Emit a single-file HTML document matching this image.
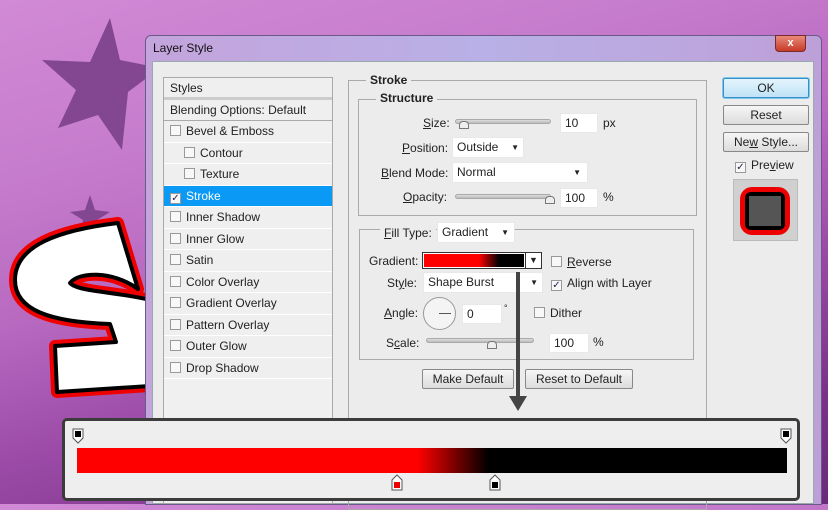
<!DOCTYPE html>
<html><head><style>
*{margin:0;padding:0;box-sizing:border-box}
html,body{width:828px;height:504px}
body{overflow:hidden;position:relative;font-family:"Liberation Sans",sans-serif;font-size:12px;color:#222;
background:linear-gradient(165deg,#d18ad6 0%,#c67ccc 25%,#b869c0 45%,#9a4aa6 65%,#7a3289 85%,#6a2a7a 100%)}
.a{position:absolute}
.lbl{position:absolute;font-size:12px;white-space:nowrap}
.inp{position:absolute;background:#fff;border:1px solid #e8e8e8;font-size:12px;padding:2px 4px}
.cb{display:inline-block;width:11px;height:11px;border:1px solid #999;background:#f8f8f8;vertical-align:-1px;margin-right:5px;font-size:10px;line-height:9px;text-align:center;color:#225}
.btn{position:absolute;border:1px solid #888;border-radius:2px;background:linear-gradient(#f6f6f6,#dcdcdc);text-align:center;font-size:12px;line-height:18px}
.row{height:21.5px;line-height:21px;padding-left:6px;border-bottom:1px solid #fff;background:#efefef;white-space:nowrap}
.slider{position:absolute;height:5px;border:1px solid #aaa;border-radius:3px;background:linear-gradient(#ddd,#bbb)}
.thumb{position:absolute;width:10px;height:8px;border:1px solid #777;background:#eee;border-radius:4px 4px 0 0}
</style></head><body>
<svg class="a" style="left:0;top:0" width="828" height="504">
<polygon points="110,18 120,60 160,68 128,92 122,150 98,115 58,128 76,90 42,60 90,62" fill="#834691"/>
<polygon points="90,195 95,210 110,212 97,220 100,232 90,224 80,232 83,220 70,212 85,210" fill="#834691"/>
<path d="M118,223 C60,230 15,245 15,280 C15,310 50,322 110,324 L116,342 L55,346 L57,392 L150,386 L150,300 C120,292 78,292 70,283 C78,272 112,270 138,289 Z" fill="#e00" stroke="#e00" stroke-width="12" stroke-linejoin="round"/>
<path d="M118,223 C60,230 15,245 15,280 C15,310 50,322 110,324 L116,342 L55,346 L57,392 L150,386 L150,300 C120,292 78,292 70,283 C78,272 112,270 138,289 Z" fill="#fff" stroke="#000" stroke-width="4" stroke-linejoin="round"/>
</svg>
<!-- dialog -->
<div class="a" style="left:145px;top:35px;width:677px;height:470px;border:1px solid #6a5a8a;border-radius:6px 6px 0 0;background:linear-gradient(90deg,#c4a4dc,#b8b0e6 50%,#bea0d8);"></div>
<div class="lbl" style="left:153px;top:41px;color:#111">Layer Style</div>
<div class="a" style="left:775px;top:35px;width:31px;height:17px;border:1px solid #7a2a2a;border-radius:0 0 4px 4px;background:linear-gradient(#e88a7a,#c83a28);color:#fff;font-weight:bold;text-align:center;line-height:15px;font-size:11px">x</div>
<div class="a" style="left:152px;top:61px;width:662px;height:443px;background:#ececec;border:1px solid #9aa"></div>
<!-- styles list -->
<div class="a" style="left:163px;top:77px;width:170px;height:427px;border:1px solid #aaa;background:#f0f0f0">
<div class="row" style="border-bottom:3px solid #ccc">Styles</div>
<div class="row" style="border-bottom:1px solid #aaa">Blending Options: Default</div>
<div class="row"><span class="cb"></span>Bevel &amp; Emboss</div>
<div class="row" style="padding-left:20px"><span class="cb"></span>Contour</div>
<div class="row" style="padding-left:20px"><span class="cb"></span>Texture</div>
<div class="row" style="background:#0a9af5;color:#fff"><span class="cb">✓</span>Stroke</div>
<div class="row"><span class="cb"></span>Inner Shadow</div>
<div class="row"><span class="cb"></span>Inner Glow</div>
<div class="row"><span class="cb"></span>Satin</div>
<div class="row"><span class="cb"></span>Color Overlay</div>
<div class="row"><span class="cb"></span>Gradient Overlay</div>
<div class="row"><span class="cb"></span>Pattern Overlay</div>
<div class="row"><span class="cb"></span>Outer Glow</div>
<div class="row"><span class="cb"></span>Drop Shadow</div>
</div>
<!-- stroke group -->
<div class="a" style="left:348px;top:80px;width:359px;height:430px;border:1px solid #aaa"></div>
<div class="lbl" style="left:366px;top:73px;background:#ececec;padding:0 4px;font-weight:bold">Stroke</div>
<div class="a" style="left:358px;top:99px;width:339px;height:117px;border:1px solid #aaa"></div>
<div class="lbl" style="left:376px;top:91px;background:#ececec;padding:0 4px;font-weight:bold">Structure</div>
<div class="lbl" style="left:423px;top:116px"><u>S</u>ize:</div>
<div class="slider" style="left:455px;top:119px;width:96px"></div><div class="thumb" style="left:459px;top:121px"></div>
<div class="inp" style="left:560px;top:113px;width:38px">10</div><div class="lbl" style="left:603px;top:116px">px</div>
<div class="lbl" style="left:402px;top:141px"><u>P</u>osition:</div>
<div class="inp" style="left:452px;top:137px;width:72px;height:21px">Outside <span style="position:absolute;right:4px;font-size:8px;top:5px">▼</span></div>
<div class="lbl" style="left:381px;top:166px"><u>B</u>lend Mode:</div>
<div class="inp" style="left:452px;top:162px;width:136px;height:21px">Normal<span style="position:absolute;right:6px;font-size:8px;top:5px">▼</span></div>
<div class="lbl" style="left:403px;top:190px"><u>O</u>pacity:</div>
<div class="slider" style="left:455px;top:194px;width:96px"></div><div class="thumb" style="left:545px;top:196px"></div>
<div class="inp" style="left:560px;top:188px;width:38px">100</div><div class="lbl" style="left:603px;top:190px">%</div>
<!-- fill group -->
<div class="a" style="left:359px;top:229px;width:335px;height:131px;border:1px solid #aaa"></div>
<div class="lbl" style="left:380px;top:226px;background:#ececec;padding:0 4px"><u>F</u>ill Type:</div>
<div class="inp" style="left:437px;top:222px;width:78px;height:21px">Gradient <span style="position:absolute;right:5px;font-size:8px;top:5px">▼</span></div>
<div class="lbl" style="left:369px;top:254px">Gradient:</div>
<div class="a" style="left:422px;top:252px;width:120px;height:17px;border:1px solid #333;background:#fff"><div style="position:absolute;left:1px;top:1px;width:100px;height:13px;background:linear-gradient(90deg,#f00 0,#f00 55%,#000 75%,#000)"></div><div style="position:absolute;right:0;top:0;width:16px;height:15px;border-left:1px solid #333;font-size:9px;text-align:center;line-height:15px">▼</div></div>
<div class="lbl" style="left:551px;top:255px"><span class="cb"></span><u>R</u>everse</div>
<div class="lbl" style="left:387px;top:276px">St<u>y</u>le:</div>
<div class="inp" style="left:423px;top:272px;width:120px;height:21px">Shape Burst<span style="position:absolute;right:4px;font-size:8px;top:5px">▼</span></div>
<div class="lbl" style="left:551px;top:276px"><span class="cb">✓</span>Align with Layer</div>
<div class="lbl" style="left:384px;top:306px"><u>A</u>ngle:</div>
<div class="a" style="left:423px;top:297px;width:33px;height:33px;border:1px solid #999;border-radius:50%;background:#f4f4f4"><div style="position:absolute;left:15px;top:15px;width:12px;height:1px;background:#555"></div></div>
<div class="inp" style="left:462px;top:304px;width:40px">0</div><div class="lbl" style="left:504px;top:303px;font-size:9px">°</div>
<div class="lbl" style="left:534px;top:306px"><span class="cb"></span>Dither</div>
<div class="lbl" style="left:386px;top:336px">S<u>c</u>ale:</div>
<div class="slider" style="left:426px;top:338px;width:108px"></div><div class="thumb" style="left:487px;top:341px"></div>
<div class="inp" style="left:549px;top:333px;width:40px">100</div><div class="lbl" style="left:593px;top:335px">%</div>
<div class="btn" style="left:422px;top:369px;width:92px">Make Default</div>
<div class="btn" style="left:525px;top:369px;width:108px">Reset to Default</div>
<div class="a" style="left:516px;top:272px;width:4px;height:132px;background:#444"></div>
<svg class="a" style="left:509px;top:396px" width="18" height="16"><polygon points="0,0 18,0 9,15" fill="#444"/></svg>
<!-- right buttons -->
<div class="btn" style="left:723px;top:78px;width:86px;border-color:#3a8fc8;background:linear-gradient(#e4f4fc,#bfe3f6);box-shadow:0 0 0 1px #7cc8ea">OK</div>
<div class="btn" style="left:723px;top:105px;width:86px">Reset</div>
<div class="btn" style="left:723px;top:132px;width:86px">Ne<u>w</u> Style...</div>
<div class="lbl" style="left:735px;top:158px"><span class="cb">✓</span>Pre<u>v</u>iew</div>
<div class="a" style="left:733px;top:179px;width:65px;height:62px;background:#d0d0d0;border:1px solid #bbb"></div>
<div class="a" style="left:740px;top:187px;width:50px;height:48px;background:#e00;border-radius:12px"></div>
<div class="a" style="left:745px;top:192px;width:40px;height:38px;background:#000;border-radius:6px"></div>
<div class="a" style="left:749px;top:196px;width:32px;height:30px;background:#555"></div>
<!-- gradient editor -->
<div class="a" style="left:62px;top:418px;width:738px;height:83px;border:3px solid #3c3c3c;border-radius:5px;background:#eeeeee"></div>
<div class="a" style="left:77px;top:448px;width:710px;height:25px;background:linear-gradient(90deg,#f00 0,#f00 48%,#000 58%,#000 100%)"></div>
<svg class="a" style="left:72px;top:428px" width="12" height="16"><path d="M1,1H11V10L6,15L1,10Z" fill="#fff" stroke="#555"/><rect x="3" y="3" width="6" height="6" fill="#000"/></svg>
<svg class="a" style="left:780px;top:428px" width="12" height="16"><path d="M1,1H11V10L6,15L1,10Z" fill="#fff" stroke="#555"/><rect x="3" y="3" width="6" height="6" fill="#000"/></svg>
<svg class="a" style="left:391px;top:474px" width="12" height="17"><path d="M6,1L11,6V16H1V6Z" fill="#fff" stroke="#555"/><rect x="3" y="8" width="6" height="6" fill="#e00"/></svg>
<svg class="a" style="left:489px;top:474px" width="12" height="17"><path d="M6,1L11,6V16H1V6Z" fill="#fff" stroke="#555"/><rect x="3" y="8" width="6" height="6" fill="#000"/></svg>
</body></html>
